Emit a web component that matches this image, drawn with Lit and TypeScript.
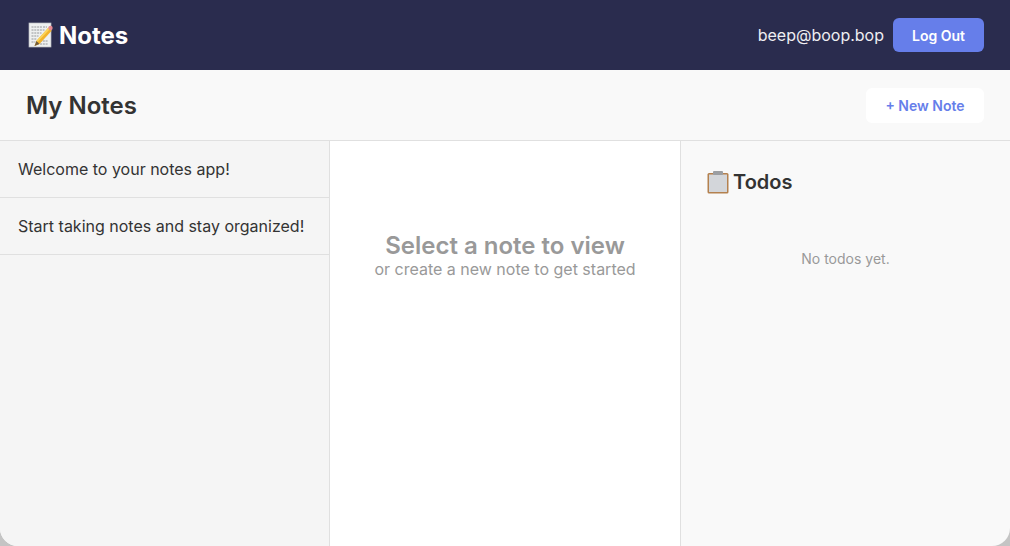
import { LitElement, html, css } from "lit";
import { customElement } from "lit/decorators.js";

@customElement("app-root")
export class AppRoot extends LitElement {
  static styles = css`
    :host {
      display: block;
      height: 546px;
      background: #c4c4c4;
      font-family: "Inter", "Liberation Sans", sans-serif;
    }
    .app {
      display: flex;
      flex-direction: column;
      height: 546px;
      overflow: hidden;
      border-radius: 0 0 18px 18px;
      background: #f9f9f9;
    }
    .topbar {
      display: flex;
      align-items: center;
      justify-content: space-between;
      flex: 0 0 70px;
      padding: 0 26px 0 28px;
      background: #2a2c4e;
      color: #fff;
    }
    .brand {
      display: flex;
      align-items: center;
      gap: 5px;
      font-size: 24px;
      font-weight: 700;
    }
    .user {
      display: flex;
      align-items: center;
      gap: 9px;
      font-size: 16px;
      color: #eeeef2;
    }
    .logout {
      width: 91px;
      height: 34px;
      border: 0;
      border-radius: 6px;
      background: #667eea;
      color: #fff;
      font: 600 14px "Inter", sans-serif;
    }
    .subbar {
      display: flex;
      align-items: center;
      justify-content: space-between;
      flex: 0 0 70px;
      padding: 0 26px;
      border-bottom: 1px solid #e0e0e0;
      box-sizing: content-box;
    }
    h1 {
      margin: 0;
      font-size: 24px;
      font-weight: 600;
      color: #333;
    }
    .new {
      width: 118px;
      height: 35px;
      border: 0;
      border-radius: 6px;
      background: #fff;
      color: #667eea;
      font: 600 14px "Inter", sans-serif;
    }
    .columns {
      display: grid;
      grid-template-columns: 330px 351px 1fr;
      flex: 1;
      min-height: 0;
    }
    .list {
      background: #f5f5f5;
      border-right: 1px solid #e0e0e0;
    }
    .item {
      height: 57px;
      box-sizing: border-box;
      padding: 0 18px;
      border-bottom: 1px solid #e0e0e0;
      font-size: 16px;
      line-height: 56px;
      color: #333;
      white-space: nowrap;
      overflow: hidden;
      text-overflow: ellipsis;
    }
    .viewer {
      display: flex;
      flex-direction: column;
      align-items: center;
      padding-top: 90px;
      background: #fff;
      border-right: 1px solid #e0e0e0;
      color: #999;
    }
    .viewer strong {
      font-size: 24px;
      line-height: 29px;
      font-weight: 600;
    }
    .viewer span {
      font-size: 16px;
      line-height: 19px;
    }
    .todos {
      padding: 27px 26px;
    }
    h2 {
      display: flex;
      align-items: center;
      gap: 4px;
      margin: 0;
      font-size: 20px;
      line-height: 28px;
      font-weight: 600;
      color: #333;
    }
    .empty {
      margin-top: 53px;
      text-align: center;
      font-size: 14px;
      line-height: 20px;
      color: #999;
    }
  `;

  private memoIcon() {
    return html`<svg width="26" height="26" viewBox="0 0 26 26">
      <rect x="1" y="1" width="22" height="24" fill="#eef0f0" stroke="#b9bcc0" stroke-width=".7"/>
      <path d="M3.5 5h11M3.5 8h13M3.5 11h10M3.5 14h7M3.5 17h5M3.5 20h4M15 5h4M12 19h8M12 22h8" stroke="#8a8d90" stroke-width=".9" stroke-dasharray="2 .8"/>
      <path d="M20.5 5.5l3.2 3.2L11.5 22l-5 2 2-5.200z" fill="#f2b32c"/>
      <path d="M20.5 5.500l1.500 1.500L9.500 20l-1-1z" fill="#fbd55a"/>
      <path d="M8.500 19l3 3-5 2z" fill="#6f5a3c"/>
      <circle cx="22.500" cy="6" r="2.200" fill="#e58a92"/>
    </svg>`;
  }

  private clipboardIcon() {
    return html`<svg width="22" height="23" viewBox="0 0 22 23">
      <rect x=".5" y="2" width="21" height="20.500" rx="1.500" fill="#b4814f"/>
      <rect x="2" y="3.500" width="18" height="17.500" fill="#d3d6da"/>
      <rect x="6" y="0" width="10" height="4" rx="1" fill="#9b9ea2"/>
    </svg>`;
  }

  render() {
    return html`
      <div class="app">
        <header class="topbar">
          <div class="brand">${this.memoIcon()}<span>Notes</span></div>
          <div class="user">
            <span>beep@boop.bop</span>
            <button class="logout">Log Out</button>
          </div>
        </header>
        <div class="subbar">
          <h1>My Notes</h1>
          <button class="new">+ New Note</button>
        </div>
        <div class="columns">
          <aside class="list">
            <div class="item">Welcome to your notes app!</div>
            <div class="item">Start taking notes and stay organized!</div>
          </aside>
          <main class="viewer">
            <strong>Select a note to view</strong>
            <span>or create a new note to get started</span>
          </main>
          <section class="todos">
            <h2>${this.clipboardIcon()}<span>Todos</span></h2>
            <div class="empty">No todos yet.</div>
          </section>
        </div>
      </div>
    `;
  }
}
